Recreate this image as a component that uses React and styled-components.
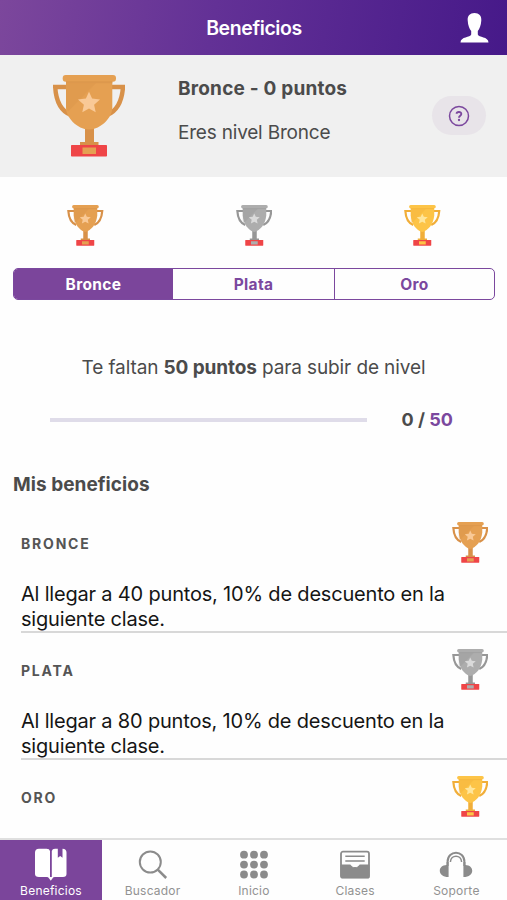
import React from "react";
import styled, { createGlobalStyle } from "styled-components";

const Global = createGlobalStyle`
  * { box-sizing: border-box; }
  html, body { margin: 0; background: #fefefe; }
  body { font-family: Inter, "Liberation Sans", sans-serif; color: #4b4b4b; }
  svg { display: block; flex: none; }
`;

const Screen = styled.div`
  width: 507px;
  height: 900px;
  display: flex;
  flex-direction: column;
  overflow: hidden;
`;

const Header = styled.header`
  flex: none;
  height: 54.5px;
  display: grid;
  grid-template-columns: 60px 1fr 60px;
  align-items: center;
  background: linear-gradient(100deg, #7c479c 0%, #633196 42%, #461989 100%);
`;

const Title = styled.h1`
  grid-column: 2;
  margin: 2px 0 0 1px;
  text-align: center;
  font-size: 19.5px;
  line-height: 24px;
  font-weight: 600;
  letter-spacing: -0.4px;
  color: #fff;
`;

const ProfileButton = styled.div`
  justify-self: end;
  margin: 2px 18px 0 0;
`;

const Summary = styled.section`
  flex: none;
  height: 122.5px;
  display: flex;
  align-items: center;
  padding: 0 21px 0 53px;
  background: #f0f0f0;
`;

const SummaryText = styled.div`
  flex: 1;
  margin: -9px 0 0 53px;
`;

const Level = styled.div`
  font-size: 19px;
  line-height: 24px;
  font-weight: 700;
  letter-spacing: 0.2px;
`;

const LevelNote = styled.div`
  margin-top: 20px;
  font-size: 19px;
  line-height: 24px;
  letter-spacing: -0.2px;
`;

const HelpButton = styled.div`
  width: 54px;
  height: 39px;
  border-radius: 20px;
  background: #e8e4e9;
  display: grid;
  place-items: center;
`;

const TrophyRow = styled.div`
  flex: none;
  display: grid;
  grid-template-columns: repeat(3, 1fr);
  justify-items: center;
  width: 507px;
  padding: 28px 0 0 1px;
`;

const Segments = styled.div`
  flex: none;
  display: grid;
  grid-template-columns: 159px 161px 1fr;
  width: 482px;
  height: 32px;
  margin: 22px 0 0 13px;
  border: 1.5px solid #7b489e;
  border-radius: 5px;
  overflow: hidden;
`;

const Segment = styled.div`
  display: flex;
  align-items: center;
  justify-content: center;
  padding-top: 1px;
  font-size: 15.5px;
  font-weight: 700;
  letter-spacing: 0.35px;
  color: ${(p) => (p.$active ? "#fff" : "#7b489e")};
  background: ${(p) => (p.$active ? "#7b459b" : "transparent")};
  & + & + & { border-left: 1.5px solid #7b489e; }
`;

const Remaining = styled.p`
  flex: none;
  margin: 55.5px 0 0;
  text-align: center;
  font-size: 19px;
  line-height: 24px;
  letter-spacing: -0.11px;
  white-space: nowrap;
  b { font-weight: 700; }
`;

const Progress = styled.div`
  flex: none;
  display: flex;
  align-items: center;
  height: 24px;
  margin: 28px 0 0 50px;
`;

const Track = styled.div`
  width: 316.5px;
  height: 4px;
  margin-right: 35px;
  background: #dfdce9;
`;

const Score = styled.div`
  font-size: 18px;
  font-weight: 700;
  letter-spacing: 0;
  white-space: nowrap;
  span { color: #7b489e; }
`;

const SectionTitle = styled.h2`
  flex: none;
  margin: 41.5px 0 0 13px;
  font-size: 19px;
  line-height: 24px;
  font-weight: 700;
  letter-spacing: 0.05px;
`;

const Benefits = styled.div`
  flex: 1;
  min-height: 0;
  overflow: hidden;
  padding: 9px 0 0 21px;
`;

const Benefit = styled.article`
  height: 127px;
  padding-top: 16px;
  border-bottom: 2px solid #d8d8d8;
`;

const BenefitHead = styled.div`
  height: 41px;
  display: flex;
  align-items: center;
  justify-content: space-between;
  padding-right: 19px;
`;

const BenefitName = styled.h3`
  margin: 2px 0 0;
  font-size: 14px;
  font-weight: 700;
  letter-spacing: 1.8px;
  color: #555;
`;

const BenefitText = styled.p`
  margin: 19px 0 0;
  font-size: 20px;
  line-height: 24.5px;
  letter-spacing: -0.19px;
  color: #151515;
  white-space: nowrap;
`;

const TabBar = styled.nav`
  flex: none;
  height: 62px;
  display: grid;
  grid-template-columns: 102px repeat(4, 1fr);
  border-top: 2px solid #dfdfdf;
  background: #fefefe;
`;

const Tab = styled.div`
  display: flex;
  flex-direction: column;
  align-items: center;
  padding-top: 8px;
  font-size: 12px;
  line-height: 16px;
  letter-spacing: 0.22px;
  color: ${(p) => (p.$active ? "#fff" : "#929292")};
  background: ${(p) => (p.$active ? "#7b459b" : "transparent")};
  svg { margin-bottom: 1px; }
`;

const metals = {
  bronze: { cup: "#e5a052", dark: "#d89149", star: "#f9c996", rim: "#dd984d" },
  silver: { cup: "#adadad", dark: "#979797", star: "#dadada", rim: "#a2a2a2" },
  gold: { cup: "#fdc447", dark: "#f1ae39", star: "#ffe69b", rim: "#f6b83e" },
};

function Trophy({ metal, large }) {
  const c = metals[metal];
  const bowl = large
    ? "M13 6H59.3V33C59.3 42 48 54.5 36 54.5S13 42 13 33Z"
    : "M13 4H60V21C58.5 38 48 51 36 54C24 51 14.5 38 13 21Z";
  return (
    <svg width={large ? 72 : 36.5} height={large ? 82 : 41} viewBox="0 0 72 82">
      <path
        d="M14 12H2.2C3 26 8 36 18 40M58.5 12H70C69 26 64 36 54 40"
        fill="none" stroke={c.dark} strokeWidth="4.4"
      />
      <path d="M32 51H41V67H45.5V72H27V67H32Z" fill={c.dark} />
      <path d={bowl} fill={c.cup} />
      <path d="M13 6H45L15 36.5L13 32Z" fill={c.dark} opacity=".35" />
      <rect x="9.7" width="53.3" height="6.7" rx="3" fill={c.cup} />
      <path d="M13 6.2H59.3V8.2H13Z" fill={c.rim} />
      <path
        d="M36 16.8L39.1 23.5L47 24.6L41.1 29.7L42.7 37.2L36 33.5L29.3 37.2L30.9 29.7L25 24.6L32.9 23.5Z"
        fill={c.star}
      />
      <rect x="18" y="70" width="36" height="11.5" rx=".8" fill="#ef4547" />
      <rect x="29.5" y="72.5" width="13.5" height="6.5" fill={c.cup} />
    </svg>
  );
}

const ProfileIcon = () => (
  <svg width="29" height="30" viewBox="0 0 29 30" fill="#fff">
    <path d="M14.5 0C19 0 21.6 2.8 21.3 7.5C21 12.5 19.5 15.8 17.8 18V21.5C18.5 24.5 28.5 23.5 28.5 29.5H.5C.5 23.5 10.5 24.5 11.2 21.5V18C9.4 15.8 8 12.5 7.7 7.5C7.4 2.8 10 0 14.5 0Z" />
  </svg>
);

const HelpIcon = () => (
  <svg width="22" height="22" viewBox="0 0 22 22" fill="none" stroke="#7b489e">
    <circle cx="11" cy="11" r="9.5" strokeWidth="1.5" />
    <path d="M8.6 8.8C8.7 6.3 13.4 6.4 13.3 9C13.3 10.8 11 10.7 11 12.7" strokeWidth="1.9" />
    <circle cx="11" cy="15" r="1.15" fill="#7b489e" stroke="none" />
  </svg>
);

const BookIcon = () => (
  <svg width="32" height="34" viewBox="0 0 32 34" fill="#fff">
    <path d="M4 .7H11.5Q14.5 .7 15 3V30Q14 29 11.5 29H4Q0 29 0 26V4.5Q0 .7 4 .7Z" />
    <path d="M16.8 3Q17.3 .7 20 .7H22.8V9.8L25.2 7.9L27.5 9.8V.7Q31.5 .7 31.5 4.5V26Q31.5 29 28 29H20Q17.8 29 16.8 30Z" />
    <path d="M13 29H18.5L15.8 32.8Z" />
  </svg>
);

const SearchIcon = () => (
  <svg width="30" height="34" viewBox="0 0 30 34" fill="none" stroke="#8b8b8b" strokeWidth="2">
    <circle cx="12.3" cy="14" r="10.5" />
    <path d="M19.8 21.7L28.2 30" strokeWidth="2.5" />
  </svg>
);

const GridIcon = () => (
  <svg width="28" height="34" viewBox="0 0 28 34" fill="#8b8b8b">
    {[6.7, 16.6, 26.5].map((y) =>
      [4, 14, 24].map((x) => <circle key={`${x}-${y}`} cx={x} cy={y} r="3.9" />)
    )}
  </svg>
);

const ClassesIcon = () => (
  <svg width="30" height="34" viewBox="0 0 30 34" fill="none" stroke="#8b8b8b">
    <rect x="1" y="3.7" width="28" height="26" rx="2" strokeWidth="1.8" />
    <path d="M5.3 8.3H24.7M5.3 13H24.7" strokeWidth="1.6" />
    <path d="M1 17H10.5C11 20.5 19 20.5 19.5 17H29V29.7H1Z" fill="#8b8b8b" />
  </svg>
);

const SupportIcon = () => (
  <svg width="34" height="34" viewBox="0 0 34 34" fill="none" stroke="#8b8b8b">
    <path d="M8.6 18V13.8C8.6 1.7 25.4 1.7 25.4 13.8V18" strokeWidth="2" />
    <path d="M11.4 14C11.8 6.3 22.2 6.3 22.6 14" strokeWidth="1.5" />
    <path d="M9.6 29C-1.8 29-1.8 17.2 7.6 17V14H9.6ZM24.4 29C35.8 29 35.8 17.2 26.4 17V14H24.4Z" fill="#8b8b8b" stroke="none" />
  </svg>
);

const tabs = [
  { name: "Beneficios", Icon: BookIcon },
  { name: "Buscador", Icon: SearchIcon },
  { name: "Inicio", Icon: GridIcon },
  { name: "Clases", Icon: ClassesIcon },
  { name: "Soporte", Icon: SupportIcon },
];

const benefits = [
  { name: "BRONCE", metal: "bronze", points: 40 },
  { name: "PLATA", metal: "silver", points: 80 },
  { name: "ORO", metal: "gold" },
];

export default function App() {
  return (
    <Screen>
      <Global />
      <Header>
        <Title>Beneficios</Title>
        <ProfileButton><ProfileIcon /></ProfileButton>
      </Header>
      <Summary>
        <Trophy metal="bronze" large />
        <SummaryText>
          <Level>Bronce - 0 puntos</Level>
          <LevelNote>Eres nivel Bronce</LevelNote>
        </SummaryText>
        <HelpButton><HelpIcon /></HelpButton>
      </Summary>
      <TrophyRow>
        <Trophy metal="bronze" />
        <Trophy metal="silver" />
        <Trophy metal="gold" />
      </TrophyRow>
      <Segments>
        <Segment $active>Bronce</Segment>
        <Segment>Plata</Segment>
        <Segment>Oro</Segment>
      </Segments>
      <Remaining>Te faltan <b>50 puntos</b> para subir de nivel</Remaining>
      <Progress>
        <Track />
        <Score>0 / <span>50</span></Score>
      </Progress>
      <SectionTitle>Mis beneficios</SectionTitle>
      <Benefits>
        {benefits.map((b) => (
          <Benefit key={b.name}>
            <BenefitHead>
              <BenefitName>{b.name}</BenefitName>
              <Trophy metal={b.metal} />
            </BenefitHead>
            {b.points && (
              <BenefitText>
                Al llegar a {b.points} puntos, 10% de descuento en la<br />siguiente clase.
              </BenefitText>
            )}
          </Benefit>
        ))}
      </Benefits>
      <TabBar>
        {tabs.map(({ name, Icon }, i) => (
          <Tab key={name} $active={i === 0}>
            <Icon />
            {name}
          </Tab>
        ))}
      </TabBar>
    </Screen>
  );
}
